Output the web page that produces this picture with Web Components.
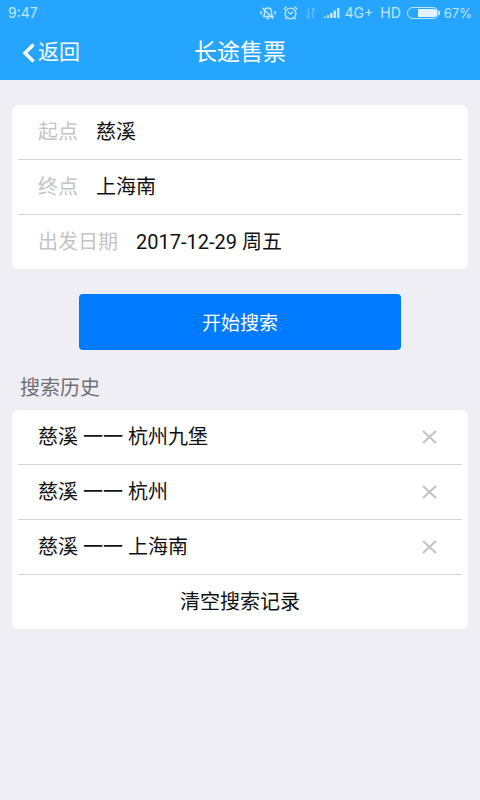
<!DOCTYPE html>
<html lang="zh-CN">
<head>
<meta charset="utf-8">
<meta name="viewport" content="width=device-width, initial-scale=1">
<title>长途售票</title>
<style>
  body {
    margin: 0;
    min-height: 100vh;
    background: #efeef4;
    color: #111;
    font: 20px/28px Roboto, "Noto Sans CJK SC", sans-serif;
  }
</style>
</head>
<body>
<ticket-page></ticket-page>

<script>
const define = (name, html, setup) => {
  const template = document.createElement('template');
  template.innerHTML = `<style>
    * { box-sizing: border-box; }
    button, input { font: inherit; color: inherit; border: 0; background: none; margin: 0; padding: 0; }
    button { cursor: pointer; }
  </style>` + html;
  customElements.define(name, class extends HTMLElement {
    constructor() {
      super();
      this.attachShadow({ mode: 'open' }).append(template.content.cloneNode(true));
    }
    connectedCallback() { if (setup) setup(this, this.shadowRoot); }
  });
};

define('status-bar', `
  <style>
    :host { display: flex; align-items: center; height: 26px; padding: 0 8px; color: #c3e6ff;
            font: 14px/16px Inter, sans-serif; }
    .time { margin-right: auto; }
    .level { font-size: 13px; }
    svg { display: block; fill: none; stroke: currentColor; flex: none; }
    .bell, .alarm, .data { margin-right: 7px; }
    .signal { margin-right: 5px; }
    .net { margin-right: 7px; }
    .hd { margin-right: 6px; }
    .battery { margin-right: 4px; }
  </style>
  <span class="time">9:47</span>
  <svg class="bell" width="16" height="14" viewBox="0 0 16 14" stroke-width="1.4" aria-hidden="true">
    <path d="M3.500 10.500H13L11.500 8.500V5.500C11.500 3.500 10.300 2 8 2S4.500 3.500 4.500 5.500V8.500L3 10.500M6.500 12.500h3M2.500 2l10.500 10.500M1 5v3.500M15 5v3.500"/>
  </svg>
  <svg class="alarm" width="15" height="14" viewBox="0 0 15 14" stroke-width="1.4" aria-hidden="true">
    <circle cx="7.500" cy="7.500" r="5.400"/><path d="M4.800 6l2.700 2 2.700-2M.7 3.300L3.500.8M14.300 3.300L11.500.8M3.500 12l-1 1.300M11.500 12l1 1.300"/>
  </svg>
  <svg class="data" width="11" height="12" viewBox="0 0 11 12" stroke-width="1.500" opacity=".35" aria-hidden="true">
    <path d="M3.500 1v10L1 8.300M7.500 1v10M7.500 1L10 3.700"/>
  </svg>
  <svg class="signal" width="17" height="12" viewBox="0 0 17 12" style="fill:currentColor;stroke:none" aria-hidden="true">
    <path d="M0 11l3-2v2H0zM4 8h2v3H4zM7 6h2.500v5H7zM10.500 3.500H13V11h-2.500zM14 1h2.500v10H14z"/>
  </svg>
  <span class="net">4G+</span><span class="hd">HD</span>
  <svg class="battery" width="33" height="12" viewBox="0 0 33 12" aria-hidden="true">
    <rect x=".5" y=".5" width="31" height="11" rx="5.500"/>
    <path fill="#e2f3ff" stroke="none" d="M11 2h15.500a4 4 0 0 1 0 8H11zM32 4h1v4h-1z"/>
  </svg>
  <span class="level">67%</span>
`);

define('nav-bar', `
  <style>
    :host { display: grid; grid-template-columns: 1fr auto 1fr; align-items: center; height: 54px;
            padding: 0 22px; color: #fff; }
    button { justify-self: start; display: flex; align-items: center; gap: 3px; padding-bottom: 2px; font-size: 21px; }
    h1 { margin: 0; font-size: 23px; font-weight: 400; line-height: 30px; }
    svg { display: block; margin-top: 2px; }
  </style>
  <button type="button">
    <svg width="13" height="20" viewBox="0 0 13 20" fill="none" stroke="currentColor" stroke-width="3.400" aria-hidden="true"><path d="M11.500 1.500L3 10l8.500 8.500"/></svg>
    返回
  </button>
  <h1><slot></slot></h1>
`);

define('list-card', `
  <style>
    :host { display: block; margin: 0 12px; padding: 0 6px; background: #fff; border-radius: 7px; }
    ::slotted(:not(:first-child)) { border-top: 1px solid #d5d5d5; }
  </style>
  <slot></slot>
`);

define('form-row', `
  <style>
    :host { display: flex; align-items: center; gap: 18px; padding: 13px 20px; }
    label { color: #c4c4c4; flex: none; }
    input { flex: 1; min-width: 0; height: 28px; outline: 0; }
  </style>
  <label for="field"></label>
  <input id="field" type="text">
`, (host, root) => {
  root.querySelector('label').textContent = host.getAttribute('label');
  root.querySelector('input').value = host.getAttribute('value');
});

define('history-row', `
  <style>
    :host { display: flex; align-items: center; padding: 13px 14px 13px 20px; }
    .route { flex: 1; min-width: 0; text-align: left; }
    .remove { display: grid; place-items: center; width: 38px; height: 28px; color: #c2c2c2; }
  </style>
  <button class="route" type="button"><slot></slot></button>
  <button class="remove" type="button" aria-label="删除">
    <svg width="15" height="14" viewBox="0 0 15 14" fill="none" stroke="currentColor" stroke-width="2" aria-hidden="true"><path d="M1 1l13 12M14 1L1 13"/></svg>
  </button>
`);

define('clear-row', `
  <style>
    :host { display: block; padding: 13px 20px; }
    button { display: block; width: 100%; line-height: 28px; }
  </style>
  <button type="button"><slot></slot></button>
`);

define('search-button', `
  <style>
    :host { display: block; margin: 25px 79px 24px; }
    button { display: block; width: 100%; padding: 16px 14px 12px; border-radius: 4px; background: #007aff; color: #fff; font-size: 19px; }
  </style>
  <button type="submit"><slot></slot></button>
`);

define('ticket-page', `
  <style>
    :host { display: block; }
    header { background: #26a5ff; margin-bottom: 25px; }
    h2 { margin: 0 20px 8px; font-size: 20px; font-weight: 400; color: #6f6f74; }
  </style>
  <header>
    <status-bar></status-bar>
    <nav-bar>长途售票</nav-bar>
  </header>
  <main>
    <list-card>
      <form-row label="起点" value="慈溪"></form-row>
      <form-row label="终点" value="上海南"></form-row>
      <form-row label="出发日期" value="2017-12-29 周五"></form-row>
    </list-card>
    <search-button>开始搜索</search-button>
    <h2>搜索历史</h2>
    <list-card>
      <history-row>慈溪 一一 杭州九堡</history-row>
      <history-row>慈溪 一一 杭州</history-row>
      <history-row>慈溪 一一 上海南</history-row>
      <clear-row>清空搜索记录</clear-row>
    </list-card>
  </main>
`);
</script>
</body>
</html>
